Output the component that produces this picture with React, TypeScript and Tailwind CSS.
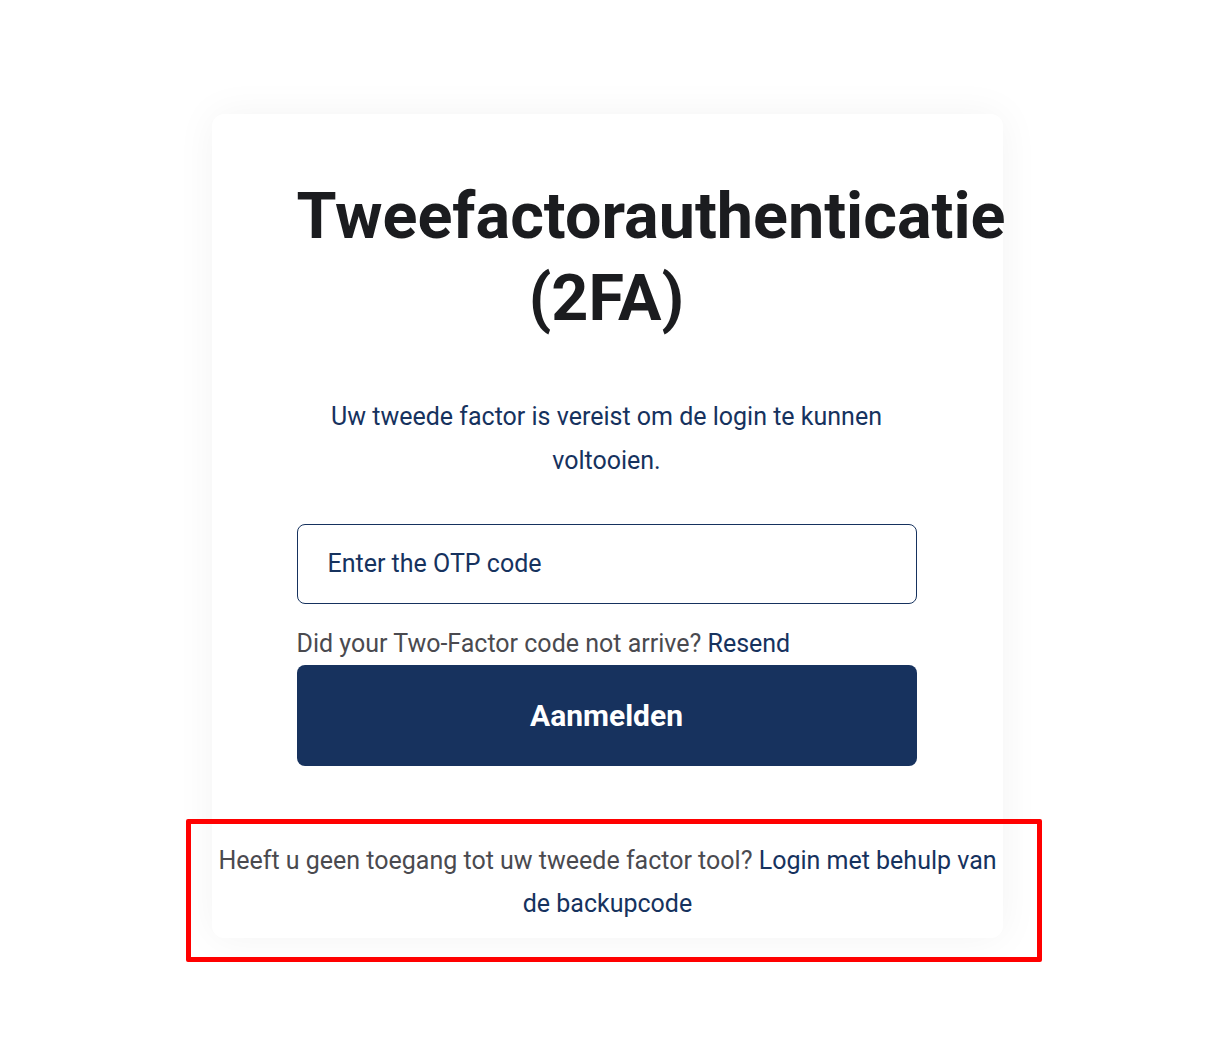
import React from "react";

export default function App() {
  return (
    <div className="relative min-h-[1060px] w-full bg-white" style={{ fontFamily: "Roboto, 'Liberation Sans', sans-serif" }}>
      <div className="flex justify-center pt-[114px] pl-[8px]">
        <div className="w-[791px] rounded-xl bg-white shadow-[0_0_40px_rgba(0,0,0,0.05)] flex flex-col items-center">
          <div className="w-[620px] flex flex-col mr-[2px]">
            <h1 className="mt-[61px] text-center text-[64.7px] font-bold leading-[82px] text-[#1b1c1f]">
              Tweefactorauthenticatie (2FA)
            </h1>
            <p className="mt-[56px] px-[10px] text-center text-[25px] leading-[44px] text-[#16325e]">
              Uw tweede factor is vereist om de login te kunnen voltooien.
            </p>
            <div className="mt-[41px] h-[80px] rounded-lg border border-[#16325e] flex items-center pl-[30px] text-[25px] text-[#16325e]">
              Enter the OTP code
            </div>
            <div className="mt-[23px] text-[25px] leading-[34px] text-[#4a4a4f]">
              Did your Two-Factor code not arrive? <span className="text-[#16325e]">Resend</span>
            </div>
            <button className="mt-[4px] h-[101px] rounded-lg bg-[#17325e] text-white text-[30px] font-bold">
              Aanmelden
            </button>
          </div>
          <p className="mt-[73px] mb-[13px] px-[1px] text-center text-[25px] leading-[43px] text-[#4a4a4f]">
            Heeft u geen toegang tot uw tweede factor tool? <span className="text-[#16325e]">Login met behulp van de backupcode</span>
          </p>
        </div>
      </div>
      <div className="absolute left-[186px] top-[819px] w-[856px] h-[143px] border-[5px] border-[#ff0000] rounded-[2px] pointer-events-none" />
    </div>
  );
}
